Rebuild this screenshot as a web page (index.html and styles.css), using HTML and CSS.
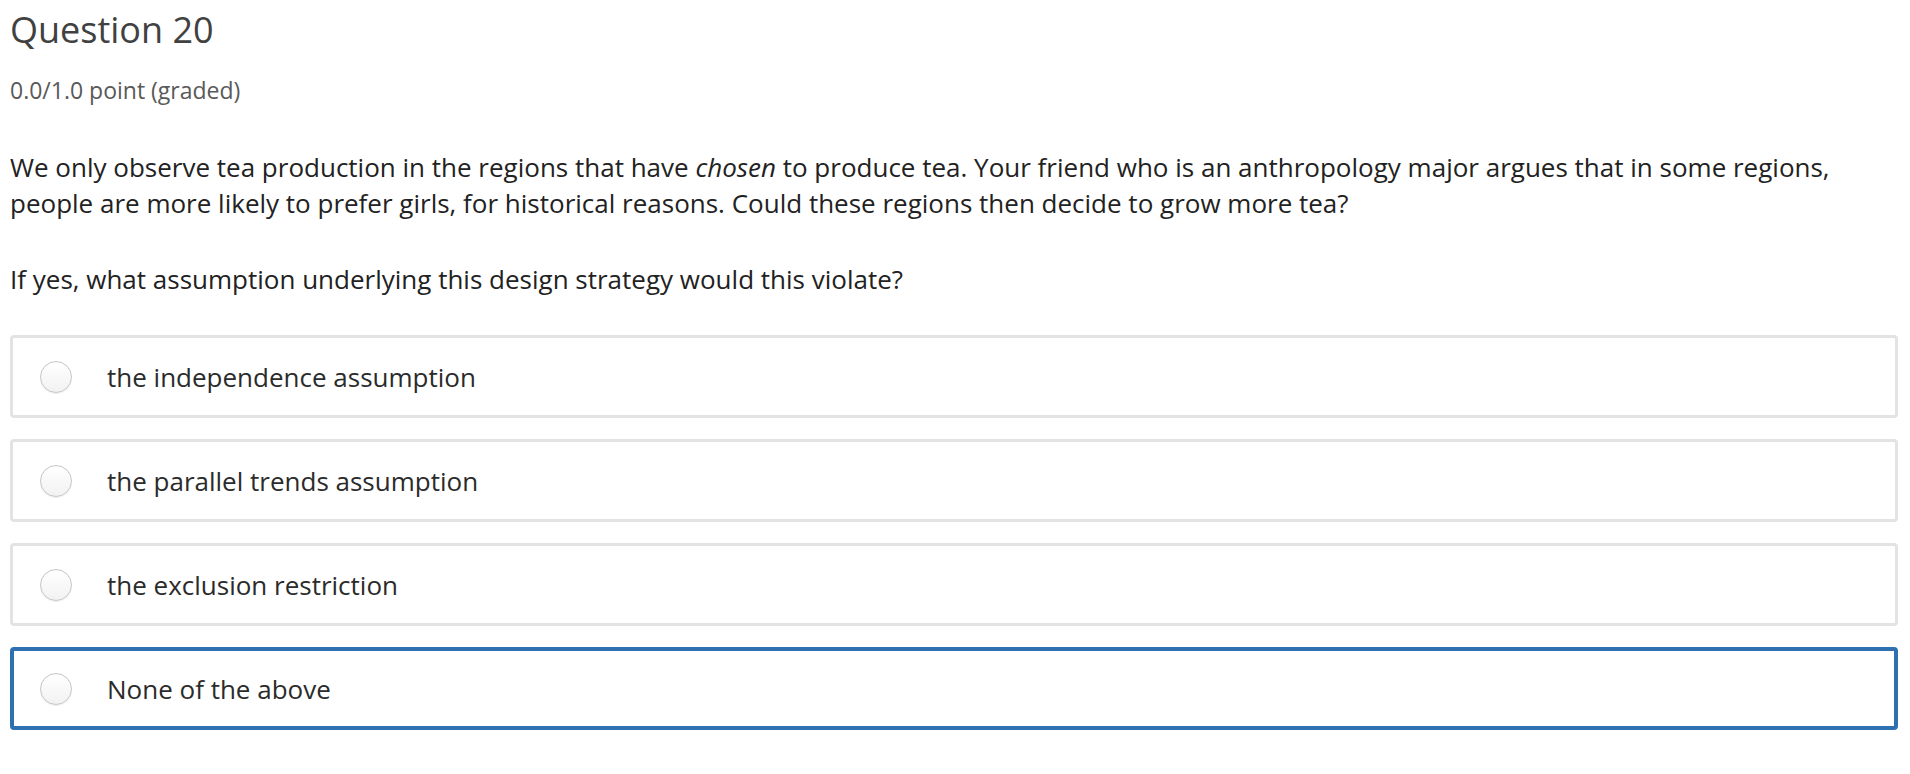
FILE: index.html
```html
<!DOCTYPE html>
<html lang="en">
<head>
<meta charset="utf-8">
<title>Question 20</title>
<link rel="stylesheet" href="styles.css">
</head>
<body>
<div class="problem">
  <h3 class="title">Question 20</h3>
  <div class="progress">0.0/1.0 point (graded)</div>
  <p class="text">We only observe tea production in the regions that have <em>chosen</em> to produce tea. Your friend who is an anthropology major argues that in some regions, people are more likely to prefer girls, for historical reasons. Could these regions then decide to grow more tea?</p>
  <p class="text second">If yes, what assumption underlying this design strategy would this violate?</p>
  <div class="choices">
    <label class="choice"><span class="radio"></span><span class="label">the independence assumption</span></label>
    <label class="choice"><span class="radio"></span><span class="label">the parallel trends assumption</span></label>
    <label class="choice"><span class="radio"></span><span class="label">the exclusion restriction</span></label>
    <label class="choice focused"><span class="radio"></span><span class="label">None of the above</span></label>
  </div>
</div>
</body>
</html>
```
FILE: styles.css
```css
html, body {
  margin: 0;
  padding: 0;
  background: #ffffff;
}
body {
  font-family: "Open Sans", "Noto Sans", sans-serif;
  color: #222222;
}
.problem {
  padding: 6px 12px 0 10px;
}
.title {
  margin: 0;
  font-size: 36px;
  font-weight: 400;
  line-height: 48px;
  color: #414141;
}
.progress {
  margin-top: 22px;
  font-size: 23px;
  line-height: 28px;
  color: #595959;
}
.text {
  margin: 45px 0 0 0;
  font-size: 26px;
  line-height: 36px;
  color: #222222;
}
.text.second {
  margin-top: 40px;
  margin-bottom: 38px;
}
.choices {
  display: flex;
  flex-direction: column;
  gap: 21px;
}
.choice {
  display: flex;
  align-items: center;
  height: 83px;
  box-sizing: border-box;
  border: 3px solid #e3e3e3;
  border-radius: 4px;
  padding-left: 27px;
}
.choice.focused {
  border: 4px solid #2f71b0;
  padding-left: 26px;
}
.radio {
  flex: none;
  width: 32px;
  height: 32px;
  box-sizing: border-box;
  border-radius: 50%;
  border: 1px solid #c6c6c6;
  background: linear-gradient(#ffffff, #f2f2f2);
  box-shadow: 0 1px 1px rgba(0,0,0,0.06);
}
.label {
  margin-left: 35px;
  font-size: 26px;
  color: #2b2b2b;
}
```
